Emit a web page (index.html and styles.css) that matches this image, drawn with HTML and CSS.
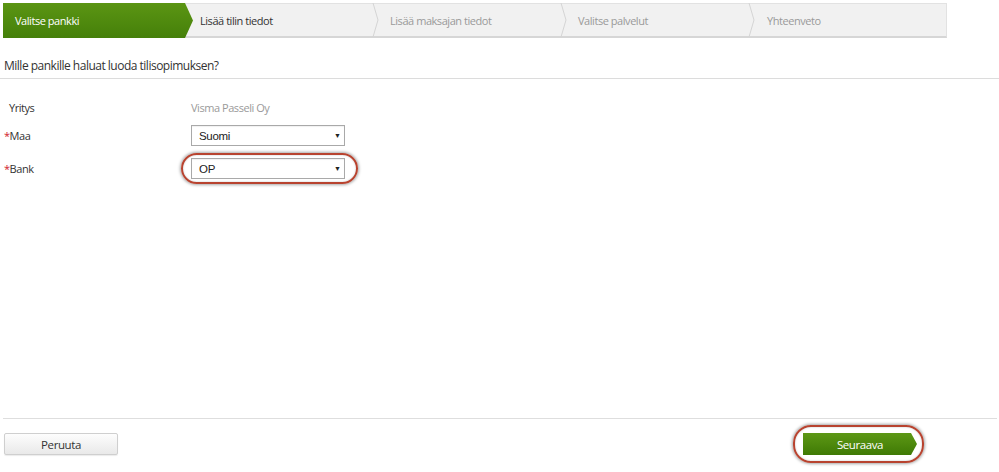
FILE: index.html
```html
<!DOCTYPE html>
<html lang="fi">
<head>
<meta charset="utf-8">
<title>Valitse pankki</title>
<link rel="stylesheet" href="styles.css">
</head>
<body>
<div class="page">
  <nav class="stepper">
    <div class="step step-active">Valitse pankki</div>
    <div class="step step-current">Lisää tilin tiedot</div>
    <svg class="chev" viewBox="0 0 8 34" width="8" height="34"><polyline points="1,0 6,17 1,34" fill="none" stroke="#d4d4d4" stroke-width="1"/></svg>
    <div class="step step-todo">Lisää maksajan tiedot</div>
    <svg class="chev" viewBox="0 0 8 34" width="8" height="34"><polyline points="1,0 6,17 1,34" fill="none" stroke="#d4d4d4" stroke-width="1"/></svg>
    <div class="step step-todo">Valitse palvelut</div>
    <svg class="chev" viewBox="0 0 8 34" width="8" height="34"><polyline points="1,0 6,17 1,34" fill="none" stroke="#d4d4d4" stroke-width="1"/></svg>
    <div class="step step-todo step-last">Yhteenveto</div>
  </nav>

  <h1 class="title">Mille pankille haluat luoda tilisopimuksen?</h1>

  <main class="form">
    <div class="row row-first">
      <div class="label label-plain">Yritys</div>
      <div class="value">Visma Passeli Oy</div>
    </div>
    <div class="row">
      <div class="label"><span class="req">*</span>Maa</div>
      <div class="select"><span>Suomi</span><span class="arrow">▼</span></div>
    </div>
    <div class="row">
      <div class="label"><span class="req">*</span>Bank</div>
      <div class="select highlight"><span>OP</span><span class="arrow">▼</span></div>
    </div>
  </main>

  <footer class="footer">
    <button class="btn btn-cancel" type="button">Peruuta</button>
    <div class="next-wrap">
      <button class="btn btn-next" type="button">Seuraava</button>
    </div>
  </footer>
</div>
</body>
</html>
```

FILE: styles.css
```css
* { box-sizing: border-box; }

html, body {
  margin: 0;
  padding: 0;
  background: #fff;
}

body {
  font-family: "Open Sans", "Noto Sans", sans-serif;
  font-size: 11px;
  letter-spacing: -0.45px;
  color: #333;
}

.page {
  width: 999px;
  height: 472px;
  padding-top: 3px;
}

/* Stepper */
.stepper {
  display: flex;
  align-items: stretch;
  margin-left: 3px;
  width: 944px;
  height: 35px;
  background: #f1f1f1;
  border-top: 1px solid #e2e2e2;
  border-right: 1px solid #e2e2e2;
  border-bottom: 2px solid #d6d6d6;
}

.step {
  display: flex;
  align-items: center;
  white-space: nowrap;
  font-size: 11px;
}

.step-active {
  width: 190px;
  margin-top: -1px;
  margin-bottom: -2px;
  padding-left: 12px;
  color: #fff;
  background: linear-gradient(#5b9513, #45800a);
  clip-path: polygon(0 0, calc(100% - 8px) 0, 100% 50%, calc(100% - 8px) 100%, 0 100%);
}

.step-current {
  width: 179px;
  padding-left: 7px;
  color: #333;
}

.step-todo {
  width: 180px;
  padding-left: 10px;
  color: #9a9a9a;
}

.step-last {
  flex: 1;
  padding-left: 11px;
}

.chev {
  flex: none;
  display: block;
  align-self: center;
}

/* Title */
.title {
  margin: 19px 0 0;
  padding: 0 0 4px 4px;
  font-size: 12px;
  letter-spacing: -0.5px;
  font-weight: normal;
  color: #333;
  border-bottom: 1px solid #dcdcdc;
}

/* Form */
.form {
  height: 340px;
  padding-top: 16px;
  border-bottom: 1px solid #dedede;
  margin-right: 2px;
  margin-left: 3px;
}

.row {
  display: flex;
  align-items: center;
  height: 33px;
}

.row-first {
  height: 24px;
}

.label {
  width: 188px;
  padding-left: 1px;
  color: #333;
}

.label-plain {
  padding-left: 6px;
}

.req {
  color: #d0202a;
}

.value {
  color: #9a9a9a;
}

.select {
  position: relative;
  display: flex;
  align-items: center;
  justify-content: space-between;
  width: 154px;
  height: 21px;
  padding: 0 3px 0 7px;
  font-family: "Liberation Sans", Arial, sans-serif;
  font-size: 11.5px;
  letter-spacing: -0.3px;
  color: #222;
  background: #fff;
  border: 1px solid #a9a9a9;
  box-shadow: inset 0 1px 1px rgba(0,0,0,0.06);
}

.arrow {
  font-size: 7px;
  letter-spacing: 0;
  color: #222;
}

.highlight::after {
  content: "";
  position: absolute;
  left: -11px;
  top: -6px;
  right: -14px;
  bottom: -6px;
  border: 2px solid #b8432f;
  border-radius: 16px;
  box-shadow: 0 0 3px 1px rgba(0,0,0,0.35), inset 0 0 2px rgba(0,0,0,0.25);
  pointer-events: none;
}

/* Footer */
.footer {
  display: flex;
  align-items: center;
  justify-content: space-between;
  padding: 14px 82px 0 4px;
}

.btn {
  font-family: "Open Sans", "Noto Sans", sans-serif;
  font-size: 11.5px;
  letter-spacing: -0.4px;
  height: 22px;
  padding: 0;
  cursor: pointer;
}

.btn-cancel {
  width: 114px;
  color: #333;
  background: linear-gradient(#fdfdfd, #e9e9e9);
  border: 1px solid #cfcfcf;
  border-radius: 2px;
  box-shadow: 0 1px 1px rgba(0,0,0,0.08);
}

.next-wrap {
  position: relative;
  width: 114px;
  height: 22px;
}

.next-wrap::after {
  content: "";
  position: absolute;
  left: -10px;
  top: -8px;
  right: -7px;
  bottom: -8px;
  border: 2px solid #b8432f;
  border-radius: 18px;
  box-shadow: 0 0 3px 1px rgba(0,0,0,0.35), inset 0 0 2px rgba(0,0,0,0.25);
  pointer-events: none;
}

.btn-next {
  display: block;
  width: 114px;
  color: #fff;
  border: none;
  background: linear-gradient(#5d9815, #3f7a05);
  clip-path: polygon(0 0, calc(100% - 6px) 0, 100% 50%, calc(100% - 6px) 100%, 0 100%);
}
```
